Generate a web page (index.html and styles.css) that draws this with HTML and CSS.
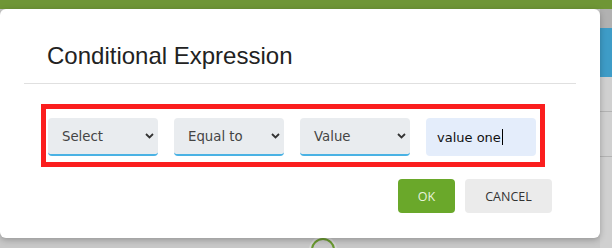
FILE: index.html
```html
<!DOCTYPE html>
<html>
<head>
<meta charset="utf-8">
<link rel="stylesheet" href="styles.css">
</head>
<body>
<div class="page">
  <div class="topbar"></div>
  <div class="below">
    <div class="main"></div>
    <div class="side">
      <div class="side-top"></div>
      <div class="side-blue"></div>
      <div class="side-rest">
        <div class="side-row"></div>
        <div class="side-row"></div>
        <div class="side-row last"></div>
      </div>
    </div>
  </div>
  <div class="node"></div>
  <div class="modal">
    <div class="modal-header">
      <h2 class="title">Conditional Expression</h2>
    </div>
    <div class="modal-body">
      <div class="expr">
        <div class="select">
          <span class="select-text">Select</span>
          <svg class="chev" width="9" height="6" viewBox="0 0 9 6"><path d="M1 1 L4.5 4.5 L8 1" fill="none" stroke="#333" stroke-width="1.8"/></svg>
        </div>
        <div class="select">
          <span class="select-text">Equal to</span>
          <svg class="chev" width="9" height="6" viewBox="0 0 9 6"><path d="M1 1 L4.5 4.5 L8 1" fill="none" stroke="#333" stroke-width="1.8"/></svg>
        </div>
        <div class="select">
          <span class="select-text">Value</span>
          <svg class="chev" width="9" height="6" viewBox="0 0 9 6"><path d="M1 1 L4.5 4.5 L8 1" fill="none" stroke="#333" stroke-width="1.8"/></svg>
        </div>
        <div class="input"><span class="input-text">value one</span><span class="caret"></span></div>
      </div>
    </div>
    <div class="modal-footer">
      <button class="btn btn-ok">OK</button>
      <button class="btn btn-cancel">CANCEL</button>
    </div>
  </div>
</div>
</body>
</html>
```
FILE: styles.css
```css
* { box-sizing: border-box; }
html, body { margin: 0; padding: 0; }
body { width: 612px; height: 248px; overflow: hidden; background: #c8c8c8; font-family: "Liberation Sans", Arial, sans-serif; }
.page { position: relative; width: 612px; height: 248px; overflow: hidden; display: flex; flex-direction: column; }
.topbar { height: 9px; background: #6f9636; flex: none; }
.below { flex: 1; display: flex; }
.main { flex: 1; background: #c8c8c8; }
.side { width: 12px; display: flex; flex-direction: column; }
.side-top { height: 19px; background: #b1b1b1; }
.side-blue { height: 49px; background: #3e9cc7; }
.side-rest { flex: 1; background: #d0d0d0; display: flex; flex-direction: column; }
.side-row { height: 45px; border-bottom: 1px solid #b3b3b3; }
.side-row:first-child { height: 35px; }
.side-row.last { border-bottom: none; flex: 1; }
.node { position: absolute; left: 311px; top: 238px; width: 24px; height: 24px; border-radius: 50%; border: 2px solid #6a9a30; box-shadow: 0 0 0 2px #d6d6d6; }
.modal { position: absolute; left: 0; top: 9px; width: 600px; height: 229px; background: #fff; border-radius: 6px; box-shadow: 0 2px 6px rgba(0,0,0,0.25); }
.modal-header { margin: 0 24px; padding: 33px 0 13px 23px; border-bottom: 1px solid #e0e0e0; }
.title { margin: 0; font-weight: normal; font-size: 24px; line-height: 28px; color: #222; font-family: "Liberation Sans", Arial, sans-serif; }
.modal-body { padding: 20px 0 0 41px; }
.expr { display: flex; gap: 16px; width: 504px; border: 5px solid #fb1e1e; padding: 9px 4px 6px 2px; }
.select { width: 110px; height: 38px; background: #e9ecef; border-radius: 4px; border-bottom: 2px solid #4ab2e4; display: flex; align-items: center; justify-content: space-between; padding: 0 4px 0 14px; }
.select-text { font-family: "DejaVu Sans", Verdana, sans-serif; font-size: 13.3px; color: #444; }
.chev { display: block; }
.input { width: 110px; height: 38px; background: #e4edfb; border-radius: 4px; display: flex; align-items: center; padding-left: 11px; }
.input-text { font-family: "DejaVu Sans", Verdana, sans-serif; font-size: 13px; color: #111; }
.caret { width: 1px; height: 16px; background: #000; margin-left: 1px; }
.modal-footer { display: flex; justify-content: flex-end; gap: 10px; padding: 12px 48px 0 0; }
.btn { height: 34px; border: none; border-radius: 4px; font-family: "Open Sans", sans-serif; font-size: 12.5px; padding: 0; }
.btn-ok { width: 57px; background: #6aa82a; color: #e8f3da; }
.btn-cancel { width: 87px; background: #ebebeb; color: #333; }
```
